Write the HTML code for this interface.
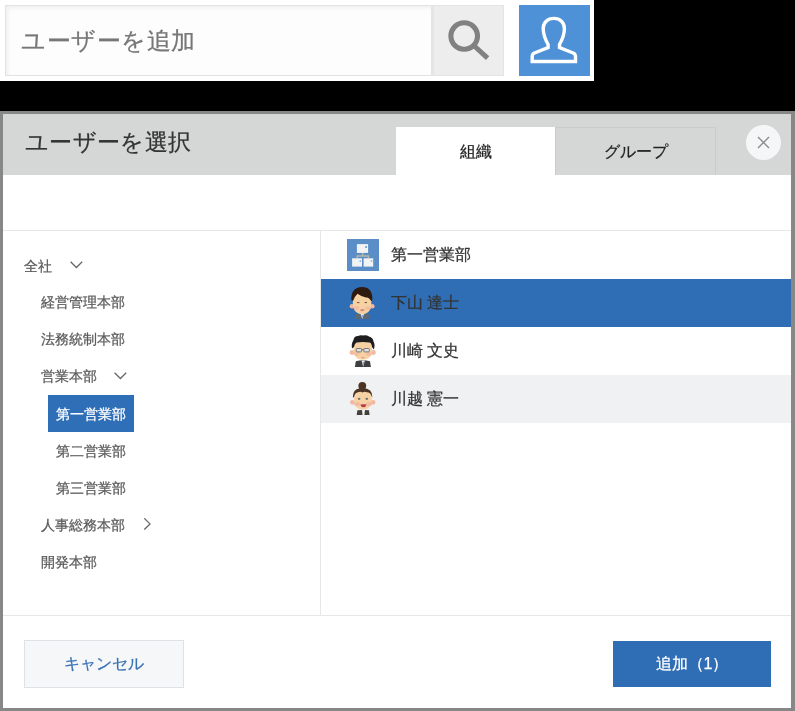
<!DOCTYPE html>
<html lang="ja">
<head>
<meta charset="utf-8">
<style>
*{box-sizing:border-box;margin:0;padding:0}
html,body{width:795px;height:711px;overflow:hidden;background:#000;font-family:"Liberation Sans",sans-serif}
.abs{position:absolute}
#topbar{left:0;top:0;width:594px;height:81px;background:#fff}
#inp{left:5px;top:5px;width:427px;height:71px;border:1px solid #dfe3e5;background:#fdfdfd;box-shadow:inset 2px 2px 4px rgba(0,0,0,.06)}
#inp span{position:absolute;left:15px;top:21px;letter-spacing:.5px;font-size:24.3px;line-height:28px;color:#777;white-space:nowrap}
#sbtn{left:431px;top:5px;width:73px;height:71px;background:#ededed;border:1px solid #e2e5e7;border-left:3px solid #e2e6e8}
#ubtn{left:519px;top:5px;width:71px;height:71px;background:#4f91d6}
#dlg{left:0;top:111px;width:795px;height:600px;background:#878787}
#dlgin{left:3px;top:114px;width:788px;height:594px;background:#fff;overflow:hidden}
#hdr{left:0;top:0;width:788px;height:61px;background:#d5d7d6}
#title{left:22px;top:13.5px;font-size:23.3px;letter-spacing:.35px;line-height:28px;color:#333;white-space:nowrap}
.tab{top:13px;height:48px;font-size:16px;line-height:50px;text-align:center;color:#222}
#tab1{left:393px;width:160px;background:#fff}
#tab2{left:552px;width:161px;background:#d5d7d6;border:1px solid #c9cccb;border-bottom:none;line-height:48px}
#close{left:743px;top:11px;width:35px;height:35px;border-radius:50%;background:#f5f6f7}
#sep1{left:0;top:116px;width:788px;height:1px;background:#e5e7e9}
#vsep{left:317px;top:117px;width:1px;height:385px;background:#e5e7e9}
#sep2{left:0;top:501px;width:788px;height:1px;background:#e5e7e9}
.ti{font-size:14px;line-height:20px;color:#5a5a5a;white-space:nowrap}
.row{left:318px;width:470px;height:48px}
.rt{position:absolute;left:70px;top:14px;font-size:16px;line-height:20px;color:#333;white-space:nowrap}
#cancel{left:21px;top:526px;width:160px;height:48px;background:#f5f7f9;border:1px solid #dde2e6;color:#3b73b6;font-size:16px;line-height:46px;text-align:center}
#add{left:610px;top:527px;width:158px;height:46px;background:#2f6db5;color:#fff;font-size:16px;line-height:46px;text-align:center}
.abs{will-change:transform}
#title,#inp span,.tab,.rt,.ti,#cancel,#add{-webkit-text-stroke:.25px currentColor}
</style>
</head>
<body>
<div id="topbar" class="abs"></div>
<div id="inp" class="abs"><span>ユーザーを追加</span></div>
<div id="sbtn" class="abs">
<svg width="75" height="72" style="position:absolute;left:-3px;top:-1px"><circle cx="33.2" cy="31" r="13.3" fill="none" stroke="#818181" stroke-width="5.1"/><line x1="42.2" y1="40" x2="56.6" y2="53.2" stroke="#818181" stroke-width="5"/></svg>
</div>
<div id="ubtn" class="abs">
<svg width="71" height="71" style="position:absolute;left:0;top:0"><path d="M35.8 13.4 C42 13.4 46.4 17.5 46.4 23.5 C46.4 29 44 35 41.5 39.5 L41.5 42.5 L55.2 48 Q57.5 49 57.5 51.5 L57.5 56.5 L14.2 56.5 L14.2 51.5 Q14.2 49 16.4 48 L30.1 42.5 L30.1 39.5 C27.6 35 25.2 29 25.2 23.5 C25.2 17.5 29.6 13.4 35.8 13.4 Z" fill="none" stroke="#fff" stroke-width="3.4" stroke-linejoin="miter" transform="translate(-1 0)"/></svg>
</div>
<div id="dlg" class="abs"></div>
<div id="dlgin" class="abs">
  <div id="hdr" class="abs"></div>
  <div id="title" class="abs">ユーザーを選択</div>
  <div id="tab1" class="abs tab">組織</div>
  <div id="tab2" class="abs tab">グループ</div>
  <div id="close" class="abs"><svg width="35" height="35"><path d="M12 12 L23 23 M23 12 L12 23" stroke="#8a8a8a" stroke-width="1.4"/></svg></div>
  <div id="sep1" class="abs"></div>
  <div id="vsep" class="abs"></div>
  <div id="sep2" class="abs"></div>

  <div class="abs ti" style="left:21px;top:142px">全社</div>
  <svg class="abs" style="left:67px;top:146px" width="14" height="9"><path d="M0.6 1.7 L6.4 7.5 L12.2 1.7" fill="none" stroke="#666" stroke-width="1.25"/></svg>
  <div class="abs ti" style="left:38px;top:178px">経営管理本部</div>
  <div class="abs ti" style="left:38px;top:215px">法務統制本部</div>
  <div class="abs ti" style="left:38px;top:252px">営業本部</div>
  <svg class="abs" style="left:111px;top:257px" width="14" height="9"><path d="M0.6 1.7 L6.4 7.5 L12.2 1.7" fill="none" stroke="#666" stroke-width="1.25"/></svg>
  <div class="abs" style="left:45px;top:281px;width:86px;height:37px;background:#2f6fb7"></div>
  <div class="abs ti" style="left:53px;top:290px;color:#fff">第一営業部</div>
  <div class="abs ti" style="left:53px;top:327px">第二営業部</div>
  <div class="abs ti" style="left:53px;top:364px">第三営業部</div>
  <div class="abs ti" style="left:38px;top:401px">人事総務本部</div>
  <svg class="abs" style="left:139px;top:404px" width="10" height="12"><path d="M2.3 0.3 L8 5.9 L2.3 11.5" fill="none" stroke="#666" stroke-width="1.25"/></svg>
  <div class="abs ti" style="left:38px;top:438px">開発本部</div>

  <div class="abs row" style="top:117px;background:#fff">
    <svg style="position:absolute;left:26px;top:8px" width="32" height="32"><rect width="32" height="32" fill="#5b8ec7"/><path d="M15.6 13.9 V17.1 M10.3 19.3 V17.1 H21.4 V19.3" stroke="#b6b8a8" fill="none" stroke-width="1.5"/><rect x="9.9" y="5.1" width="11.2" height="8.8" fill="#f1f3f5"/><rect x="5.1" y="19.3" width="9.9" height="8.3" fill="#f1f3f5"/><rect x="16.6" y="19.3" width="9.6" height="8.3" fill="#f1f3f5"/><rect x="18.3" y="7.2" width="1.6" height="1.6" fill="#4d7fbf"/><rect x="12.6" y="21.4" width="1.4" height="1.4" fill="#7fa2cf"/><rect x="23.8" y="21.4" width="1.4" height="1.4" fill="#7fa2cf"/></svg>
    <div class="rt">第一営業部</div>
  </div>
  <div class="abs row" style="top:165px;background:#2f6db5">
<svg style="position:absolute;left:23px;top:3px" width="36" height="42">
<path d="M10.7 37 L11.6 32.5 Q18.3 30.5 25.2 32.5 L26.1 37 Z" fill="#5d6a74"/>
<path d="M16.5 31.6 L18.3 37 L20.1 31.6 Z" fill="#e8eef5"/><path d="M17.8 33 L18.3 36.8 L18.8 33Z" fill="#4f8ad0"/>
<circle cx="8" cy="24.3" r="2.3" fill="#f2b9a0"/><circle cx="28.3" cy="24.3" r="2.3" fill="#f2b9a0"/>
<path d="M8.8 19 Q8.6 32.2 18.2 32.2 Q27.6 32.2 27.4 19 Q27 10.5 18.2 10.5 Q9.2 10.5 8.8 19Z" fill="#f6d1a2"/>
<ellipse cx="12.5" cy="26" rx="3" ry="2" fill="#f4b7a3" opacity=".7"/><ellipse cx="24" cy="26" rx="3" ry="2" fill="#f4b7a3" opacity=".7"/>
<path d="M7.3 18 Q6.8 5.3 18 5 Q28.6 5 28.3 17.5 L27.4 19.5 Q25 15 22 15.5 Q17 14.5 13.5 11.8 Q11 14 9 19Z" fill="#2e1b10"/>
<path d="M13 20.6 h2.4 M20.6 20.6 h2.4" stroke="#6b5040" stroke-width="1"/>
<ellipse cx="18.3" cy="28.2" rx="2.2" ry="1.1" fill="#d98a88"/>
</svg>
    <div class="rt">下山 達士</div>
  </div>
  <div class="abs row" style="top:213px;background:#fff">
<svg style="position:absolute;left:23px;top:3px" width="36" height="42">
<path d="M10.9 37 L11.8 31.2 Q18.8 29.5 26 31.2 L26.9 37 Z" fill="#3f3f40"/>
<path d="M17.6 30.6 L19.2 37 L20.8 30.6 Z" fill="#eef2f6"/><path d="M18.7 32 L19.2 36.8 L19.7 32Z" fill="#3e78c6"/>
<circle cx="8" cy="22.5" r="2.4" fill="#f2b9a0"/><circle cx="29.4" cy="22.5" r="2.4" fill="#f2b9a0"/>
<path d="M9.6 18 Q9.4 29.8 18.8 29.8 Q28.2 29.8 28 18 Q27.6 10.5 18.8 10.5 Q10 10.5 9.6 18Z" fill="#f6d1a2"/>
<ellipse cx="12.5" cy="24" rx="3" ry="2" fill="#f4b7a3" opacity=".7"/><ellipse cx="25" cy="24" rx="3" ry="2" fill="#f4b7a3" opacity=".7"/>
<path d="M8 18.5 Q7 14 9.5 10 Q10 6 14 6 Q16.5 4.8 19 5.5 Q22.5 4.8 25 6.5 Q29 7.5 29.5 11.5 Q31.5 15 29.8 19.5 L28 17 Q27.5 13 25.5 12.5 Q19 11.5 12.5 12.5 Q10.5 13.5 10 17Z" fill="#1f1f1f"/>
<rect x="12.2" y="18.5" width="5.4" height="3.4" rx=".8" fill="#dfe3e6" stroke="#6d6d6d" stroke-width=".9"/><rect x="19.9" y="18.5" width="5.4" height="3.4" rx=".8" fill="#dfe3e6" stroke="#6d6d6d" stroke-width=".9"/>
<path d="M17.6 19.6 h2.3" stroke="#6d6d6d" stroke-width=".9"/>
<path d="M17 27.2 Q18.9 29.4 20.8 27.2Z" fill="#d7868a"/>
</svg>
    <div class="rt">川崎 文史</div>
  </div>
  <div class="abs row" style="top:261px;background:#f0f1f3">
<svg style="position:absolute;left:23px;top:3px" width="36" height="42">
<path d="M12.7 37 L13.4 32.2 L18 32 L18.5 37Z" fill="#45403a"/><path d="M20.4 37 L21 32 L25 32.2 L25.6 37Z" fill="#45403a"/>
<circle cx="8.4" cy="24.3" r="2.4" fill="#f2b9a0"/><circle cx="29" cy="24.3" r="2.4" fill="#f2b9a0"/>
<path d="M10 19.5 Q9.8 31.6 18.8 31.6 Q28 31.6 27.8 19.5 Q27.4 12 18.8 12 Q10.4 12 10 19.5Z" fill="#f7d2a4"/>
<ellipse cx="13" cy="26" rx="3" ry="2" fill="#f4b2a3" opacity=".75"/><ellipse cx="25" cy="26" rx="3" ry="2" fill="#f4b2a3" opacity=".75"/>
<circle cx="18.3" cy="7.8" r="3.9" fill="#4b3424"/>
<path d="M9 20 Q8.2 10.2 18.5 10 Q28.8 10.2 28.4 19.5 L27.5 18 Q26.5 14.5 23 14.2 Q20.5 13.2 18.5 14.5 Q16.5 13.2 14 14.2 Q11 14.5 10.2 18.5Z" fill="#4b3424"/>
<ellipse cx="15.1" cy="20.8" rx="1.4" ry="1.1" fill="#6d7566"/><ellipse cx="22.8" cy="20.8" rx="1.4" ry="1.1" fill="#6d7566"/>
<path d="M16.3 26.6 Q19.5 25.8 22.6 26.6 Q22 29.3 19.5 29.3 Q17 29.3 16.3 26.6Z" fill="#b83a4c"/>
</svg>
    <div class="rt">川越 憲一</div>
  </div>

  <div id="cancel" class="abs">キャンセル</div>
  <div id="add" class="abs">追加（1）</div>
</div>
</body>
</html>
